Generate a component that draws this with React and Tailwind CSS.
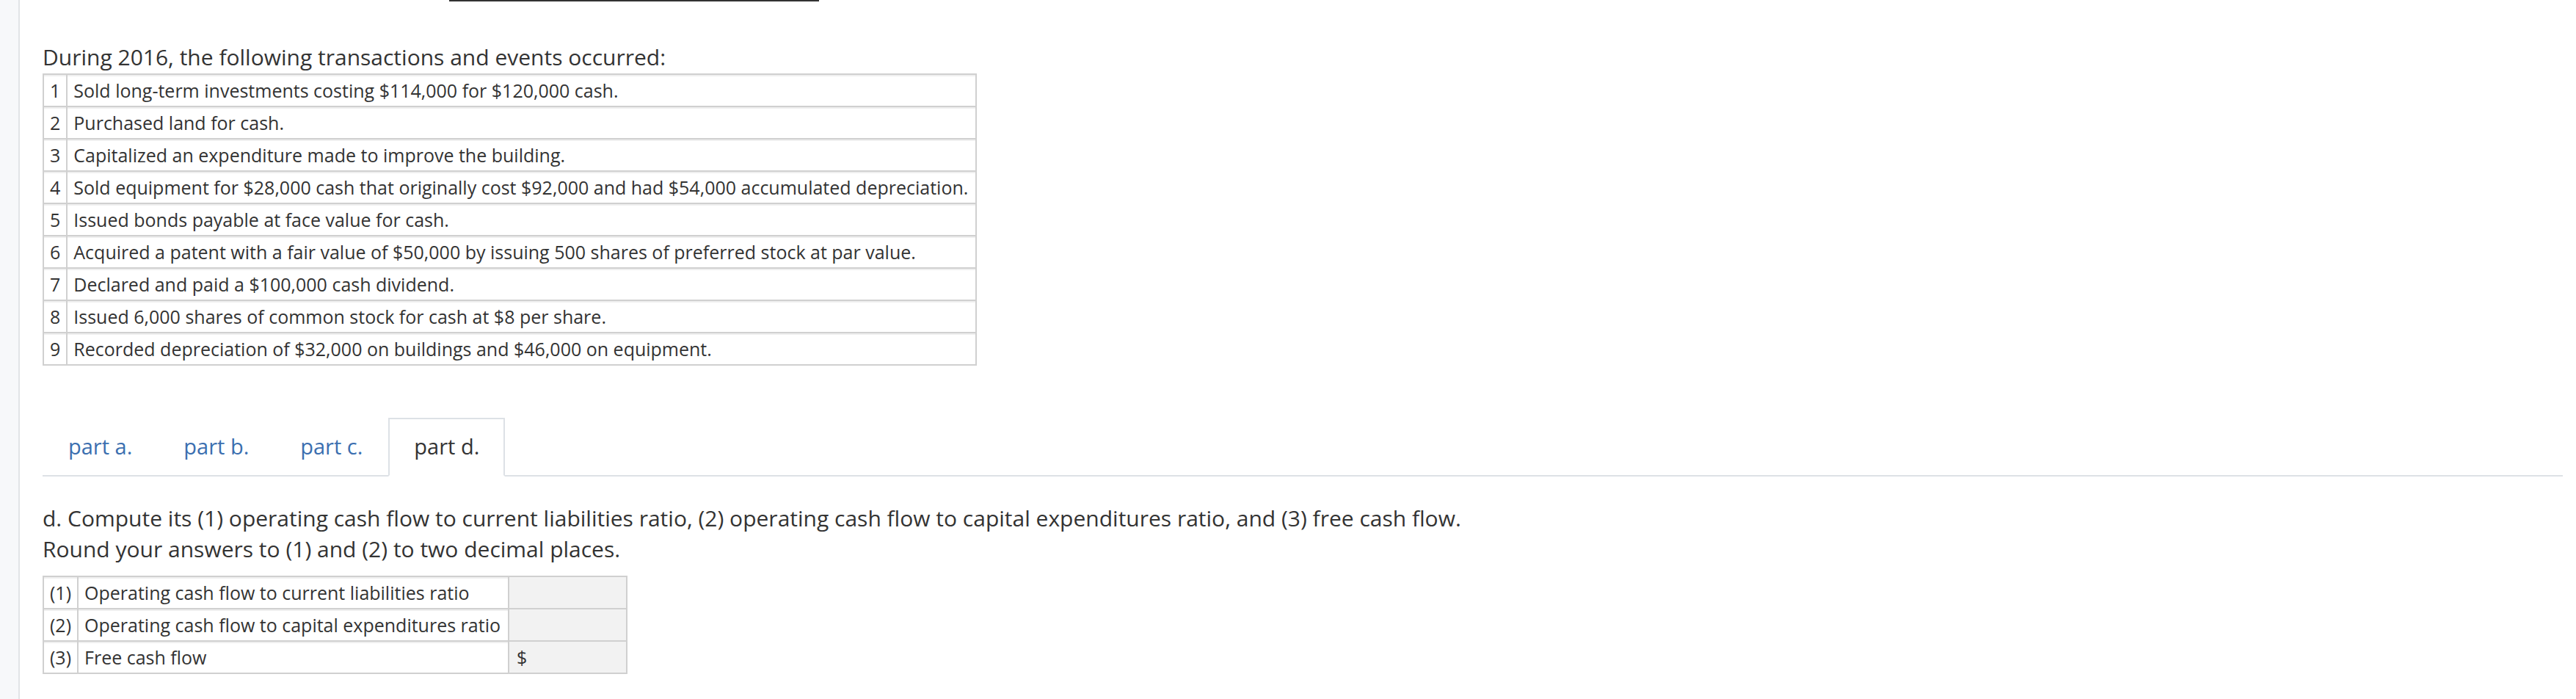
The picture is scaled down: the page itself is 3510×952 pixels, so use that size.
import { useState } from "react";

const transactions = [
  "Sold long-term investments costing $114,000 for $120,000 cash.",
  "Purchased land for cash.",
  "Capitalized an expenditure made to improve the building.",
  "Sold equipment for $28,000 cash that originally cost $92,000 and had $54,000 accumulated depreciation.",
  "Issued bonds payable at face value for cash.",
  "Acquired a patent with a fair value of $50,000 by issuing 500 shares of preferred stock at par value.",
  "Declared and paid a $100,000 cash dividend.",
  "Issued 6,000 shares of common stock for cash at $8 per share.",
  "Recorded depreciation of $32,000 on buildings and $46,000 on equipment.",
];

const answers = [
  { n: "(1)", label: "Operating cash flow to current liabilities ratio", prefix: "" },
  { n: "(2)", label: "Operating cash flow to capital expenditures ratio", prefix: "" },
  { n: "(3)", label: "Free cash flow", prefix: "$" },
];

const tabs = ["part a.", "part b.", "part c.", "part d."];

const cell =
  "border-2 border-[#d0d0d0] px-2 py-[3px] text-[25px] leading-[36px] shadow-[inset_0_2px_0_#efefef] bg-white";

export default function App() {
  const [active, setActive] = useState(3);

  return (
    <div className="flex min-h-[952px] bg-white font-['Open_Sans',sans-serif] text-[#333]">
      <div className="w-[27px] shrink-0 bg-[#f7f8fa] border-r-2 border-[#e2e4e7]" />
      <div className="flex-1 pl-[31px] pr-[18px]">
        <div className="ml-[554px] w-[504px] h-[2px] bg-[#333]" />

        <h2 className="mt-[55px] text-[30px] leading-[42px]">
          During 2016, the following transactions and events occurred:
        </h2>

        <table className="mt-px border-collapse">
          <tbody>
            {transactions.map((t, i) => (
              <tr key={i}>
                <td className={cell}>{i + 1}</td>
                <td className={`${cell} pr-[10px]`}>{t}</td>
              </tr>
            ))}
          </tbody>
        </table>

        <div className="mt-[71px] flex border-b-2 border-[#dde1e6]">
          {tabs.map((t, i) => (
            <button
              key={t}
              onClick={() => setActive(i)}
              className={
                i === active
                  ? "-mb-[2px] border-2 border-[#dde1e6] border-b-white bg-white px-[33px] pt-[16px] pb-[18px] text-[29px] leading-[42px] text-[#333]"
                  : "-mb-[2px] border-2 border-transparent px-[33px] pt-[16px] pb-[18px] text-[29px] leading-[42px] text-[#3b6fb0]"
              }
            >
              {t}
            </button>
          ))}
        </div>

        <p className="mt-[36px] text-[30px] leading-[42px]">
          d. Compute its (1) operating cash flow to current liabilities ratio, (2) operating cash flow to
          capital expenditures ratio, and (3) free cash flow.
          <br />
          Round your answers to (1) and (2) to two decimal places.
        </p>

        <table className="mt-[15px] border-collapse">
          <tbody>
            {answers.map((a) => (
              <tr key={a.n}>
                <td className={cell}>{a.n}</td>
                <td className={`${cell} pr-[10px]`}>{a.label}</td>
                <td className="w-[161px] border-2 border-[#d0d0d0] bg-[#f2f2f2] px-[10px] py-[3px] text-[25px] leading-[36px]">
                  {a.prefix}
                </td>
              </tr>
            ))}
          </tbody>
        </table>
      </div>
    </div>
  );
}
